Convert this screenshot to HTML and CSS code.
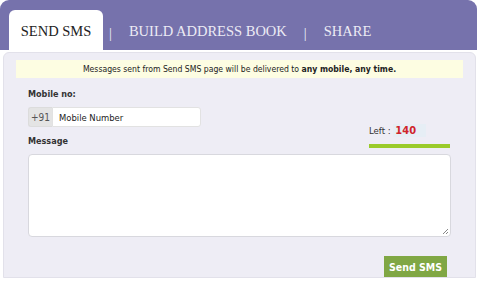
FILE: index.html
```html
<!DOCTYPE html>
<html>
<head>
<meta charset="utf-8">
<link rel="stylesheet" href="styles.css">
</head>
<body>
<div class="box">
  <div class="tabs">
    <a class="tab active">SEND SMS</a>
    <span class="sep">|</span>
    <a class="tab">BUILD ADDRESS BOOK</a>
    <span class="sep">|</span>
    <a class="tab">SHARE</a>
  </div>
  <div class="panel">
    <div class="notice">Messages sent from Send SMS page will be delivered to <b>any mobile, any time.</b></div>
    <div class="form">
      <div class="label first">Mobile no:</div>
      <div class="group">
        <span class="addon">+91</span>
        <span class="input">Mobile Number</span>
      </div>
      <div class="msgrow">
        <div class="label">Message</div>
        <div class="counter">
          <div class="left">Left : <span class="count">140</span></div>
          <div class="bar"></div>
        </div>
      </div>
      <div class="textarea">
        <svg class="grip" width="7" height="7" viewBox="0 0 7 7"><path d="M6 1L1 6M6 4L4 6" stroke="#888" stroke-width="1" fill="none"/></svg>
      </div>
      <div class="actions"><button class="send">Send SMS</button></div>
    </div>
  </div>
</div>
</body>
</html>
```
FILE: styles.css
```css
html, body { margin: 0; padding: 0; background: #fff; }
body { width: 480px; height: 282px; overflow: hidden; }
.box { width: 477px; }
.tabs {
  background: #7672ac;
  height: 50px;
  border-radius: 9px 9px 0 0;
  display: flex;
  align-items: flex-end;
  padding-left: 9px;
  box-sizing: border-box;
  font-family: "Liberation Serif", "Times New Roman", serif;
  font-size: 14.5px;
}
.tab {
  color: #ecebf4;
  height: 40px;
  line-height: 43px;
  display: block;
}
.tab.active {
  background: #fff;
  color: #222;
  width: 94px;
  text-align: center;
  border-radius: 6px 6px 0 0;
}
.sep {
  color: #f0f0f7;
  height: 40px;
  line-height: 46px;
  margin: 0 17px 0 6px;
}
.tab + .sep { margin-left: 17px; }
.tab.active + .sep { margin-left: 6px; }
.panel {
  margin: 2px 0 0 3px;
  width: 473px;
  height: 226px;
  box-sizing: border-box;
  background: #eeedf5;
  border: 1px solid #e2e1ea;
  border-radius: 6px 6px 0 0;
  padding: 7px 12px 0 12px;
  font-family: "DejaVu Sans Condensed", "DejaVu Sans", sans-serif;
}
.notice {
  background: #fdfde2;
  height: 18px;
  line-height: 18px;
  text-align: center;
  font-size: 8.6px;
  color: #222;
}
.notice b { font-weight: bold; }
.form { padding: 0 12px 0 12px; }
.label {
  font-weight: bold;
  font-size: 9px;
  color: #333;
}
.label.first { margin-top: 10px; line-height: 12px; }
.group {
  margin-top: 7px;
  display: flex;
  height: 20px;
  width: 173px;
  font-size: 10px;
}
.addon {
  width: 24px;
  background: #e4e4e4;
  color: #555;
  line-height: 20px;
  text-align: center;
  border-radius: 3px 0 0 3px;
  border: 1px solid #dcdcdc;
  border-right: none;
  box-sizing: border-box;
}
.input {
  flex: 1;
  background: #fff;
  color: #222;
  font-size: 9.4px;
  line-height: 20px;
  padding-left: 6px;
  border-radius: 0 3px 3px 0;
  border: 1px solid #e2e2e2;
  box-sizing: border-box;
}
.msgrow {
  display: flex;
  justify-content: space-between;
  align-items: flex-end;
  margin-top: -3px;
}
.msgrow .label { line-height: 12px; margin-bottom: 1px; }
.counter { width: 81px; margin-right: 1px; }
.left { font-size: 9.5px; color: #333; line-height: 14px; }
.count {
  color: #d0242b;
  font-weight: bold;
  font-size: 11px;
  background: #e6eef5;
  padding: 0 10px 0 2px;
}
.bar { height: 4px; background: #9acb2a; margin-top: 6px; }
.textarea {
  margin-top: 6px;
  height: 83px;
  background: #fff;
  border: 1px solid #d8d8de;
  border-radius: 4px;
  box-sizing: border-box;
  position: relative;
}
.grip { position: absolute; right: 1px; bottom: 1px; }
.actions { display: flex; justify-content: flex-end; margin-top: 19px; padding-right: 4px; }
.send {
  background: #80a744;
  color: #fff;
  border: none;
  font-family: "DejaVu Sans Condensed", "DejaVu Sans", sans-serif;
  font-weight: bold;
  font-size: 10.5px;
  width: 63px;
  height: 21px;
  padding: 0;
}
```
